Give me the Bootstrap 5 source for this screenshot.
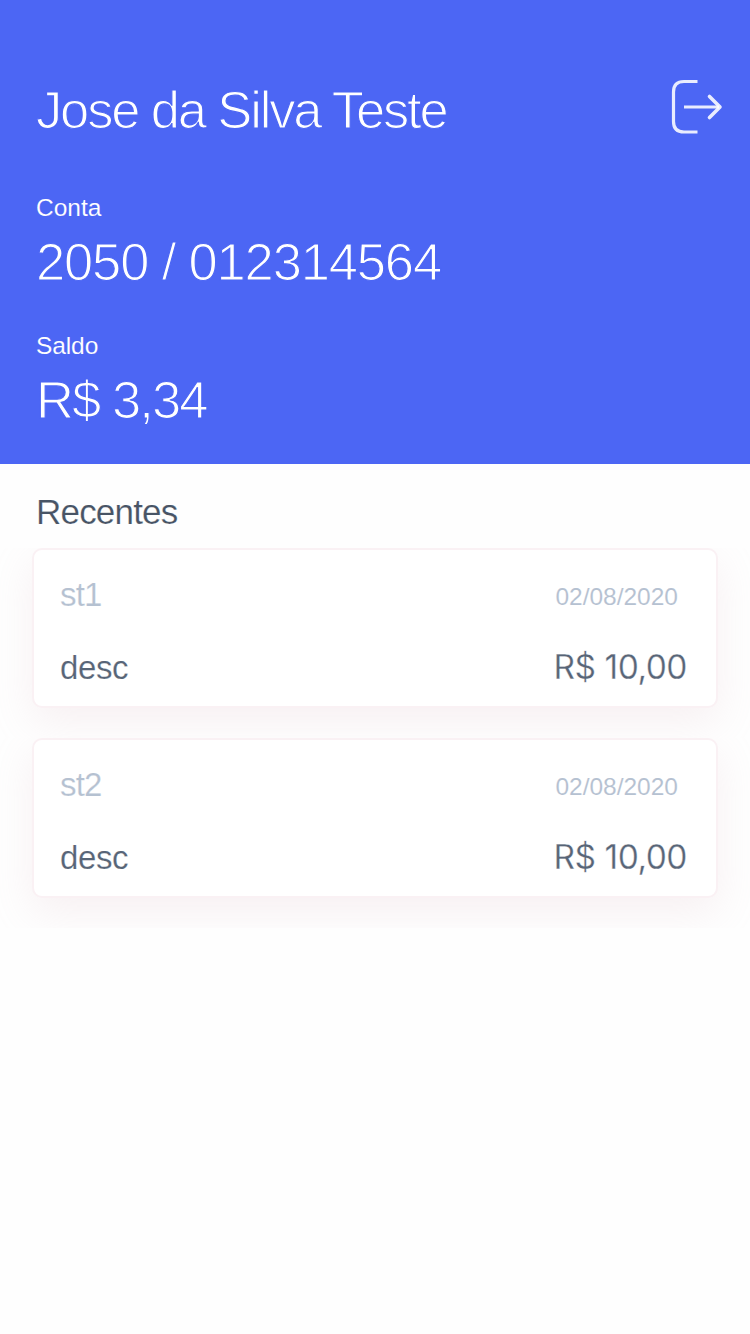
<!DOCTYPE html>
<html lang="pt-BR">
<head>
<meta charset="utf-8">
<meta name="viewport" content="width=device-width, initial-scale=1">
<title>Conta</title>
<link href="https://cdn.jsdelivr.net/npm/bootstrap@5.3.0/dist/css/bootstrap.min.css" rel="stylesheet">
<style>
  body { font-family: "Liberation Sans", Arial, sans-serif; background: #fefefe; }
  .account-head { height: 464px; background: #4c66f4; padding: 80px 27px 0 36px; }
  /* light display weight: the outline takes the background colour and trims the strokes */
  .display-line { font-size: 52.5px; line-height: 60px; white-space: nowrap; -webkit-text-stroke: 1.2px #4c66f4; }
  .holder { letter-spacing: -2.15px; }
  .number { letter-spacing: -1.15px; margin-top: 9px; }
  .balance { letter-spacing: -1.9px; margin-top: 9px; }
  .caption-line { font-size: 24.5px; line-height: 30px; -webkit-text-stroke: .1px #4c66f4; }
  .caption-account { padding-top: 53px; }
  .caption-balance { padding-top: 39px; letter-spacing: -.1px; }
  .logout { margin-top: -1px; }
  .logout svg { display: block; }
  .recent-title { font-size: 35px; line-height: 40px; color: #485465; padding: 28px 36px 16px; margin: 0; font-weight: 400; letter-spacing: -.8px; -webkit-text-stroke: .2px #fefefe; }
  .cell { height: 190px; padding: 0 32px; overflow: hidden; }
  .entry { height: 160px; border: 2px solid #faf1f4; border-radius: 10px; background: #fff; padding: 25px 29px 0 26px; box-shadow: 0 14px 40px rgba(217, 180, 190, .19); }
  .kind, .desc { font-size: 33px; line-height: 40px; letter-spacing: -.4px; -webkit-text-stroke: .2px #fff; }
  .kind { letter-spacing: -.8px; }
  .kind, .date { color: #b5c1d1; }
  .desc, .value { color: #586577; }
  .desc { padding-top: 1px; }
  .date { font-size: 24.5px; line-height: 40px; padding-top: 2px; margin-bottom: -2px; -webkit-text-stroke: .1px #fff; margin-right: 9px; }
  .value { font-family: Inter, sans-serif; font-size: 33.5px; line-height: 40px; letter-spacing: -.5px; -webkit-text-stroke: .3px #fff; }
</style>
</head>
<body>
<header class="account-head text-white">
  <div class="d-flex justify-content-between align-items-start">
    <div class="display-line holder">Jose da Silva Teste</div>
    <a href="#" class="logout text-white" aria-label="Sair">
      <svg width="54" height="58" viewBox="0 0 54 58" fill="none" stroke="currentColor" stroke-width="3.200" stroke-opacity=".88">
        <path d="M28.500 2.500H15Q4.500 2.500 4.500 13V42.500Q4.500 53 15 53H28.500"/>
        <path d="M15 28H50"/>
        <path d="M40.500 17.500L51 28L40.500 38.500" stroke-width="3.600" stroke-linecap="round" stroke-linejoin="round"/>
      </svg>
    </a>
  </div>
  <div class="caption-line caption-account">Conta</div>
  <div class="display-line number">2050 / 012314564</div>
  <div class="caption-line caption-balance">Saldo</div>
  <div class="display-line balance">R$ 3,34</div>
</header>
<main>
  <h1 class="recent-title">Recentes</h1>
  <div class="cell">
    <div class="entry">
      <div class="d-flex justify-content-between"><div class="kind">st1</div><div class="date">02/08/2020</div></div>
      <div class="d-flex justify-content-between mt-4 pt-2"><div class="desc">desc</div><div class="value">R$ 10,00</div></div>
    </div>
  </div>
  <div class="cell">
    <div class="entry">
      <div class="d-flex justify-content-between"><div class="kind">st2</div><div class="date">02/08/2020</div></div>
      <div class="d-flex justify-content-between mt-4 pt-2"><div class="desc">desc</div><div class="value">R$ 10,00</div></div>
    </div>
  </div>
</main>
<script src="https://cdn.jsdelivr.net/npm/bootstrap@5.3.0/dist/js/bootstrap.bundle.min.js"></script>
</body>
</html>
